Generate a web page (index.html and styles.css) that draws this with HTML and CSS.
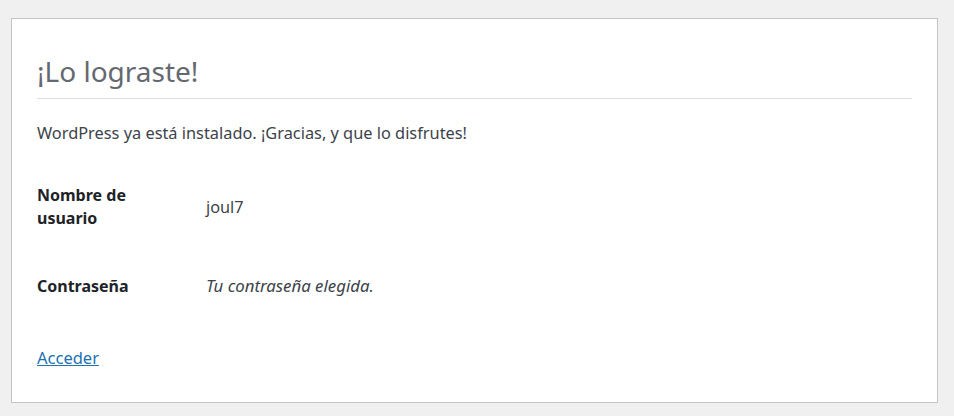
FILE: index.html
```html
<!DOCTYPE html>
<html lang="es">
<head>
<meta charset="utf-8">
<title>WordPress › Instalación</title>
<link rel="stylesheet" href="styles.css">
</head>
<body>
<div class="card">
  <h1 class="title">¡Lo lograste!</h1>
  <p class="intro">WordPress ya está instalado. ¡Gracias, y que lo disfrutes!</p>
  <div class="form-table">
    <div class="row row-user">
      <div class="label">Nombre de<br>usuario</div>
      <div class="value">joul7</div>
    </div>
    <div class="row row-pass">
      <div class="label">Contraseña</div>
      <div class="value"><em>Tu contraseña elegida.</em></div>
    </div>
  </div>
  <p class="actions"><a class="link" href="#">Acceder</a></p>
</div>
</body>
</html>
```
FILE: styles.css
```css
html, body {
  margin: 0;
  padding: 0;
}
body {
  background: #f0f0f1;
  font-family: "Noto Sans", "Open Sans", sans-serif;
  font-size: 16px;
  color: #3c434a;
  padding: 18px 16px 0 11px;
  height: 416px;
  box-sizing: border-box;
}
.card {
  background: #fff;
  border: 1px solid #c3c4c7;
  padding: 34px 25px 32px;
}
.title {
  margin: 0;
  font-size: 28px;
  line-height: 36px;
  font-weight: 400;
  color: #646970;
  padding-bottom: 9px;
  border-bottom: 1px solid #dcdcde;
}
.intro {
  margin: 22px 0 0;
  font-size: 16.35px;
  line-height: 24px;
}
.form-table {
  margin-top: 39px;
  display: flex;
  flex-direction: column;
  gap: 44px;
}
.row {
  display: grid;
  grid-template-columns: 169px 1fr;
  align-items: center;
  line-height: 23px;
}
.label {
  font-weight: 700;
  color: #1d2327;
}
.value {
  font-size: 16.3px;
}
.value em {
  font-style: italic;
  font-size: 16.8px;
}
.actions {
  margin: 48px 0 0;
  line-height: 24px;
}
.link {
  color: #2271b1;
  font-size: 16.5px;
  text-decoration: underline;
}
```
